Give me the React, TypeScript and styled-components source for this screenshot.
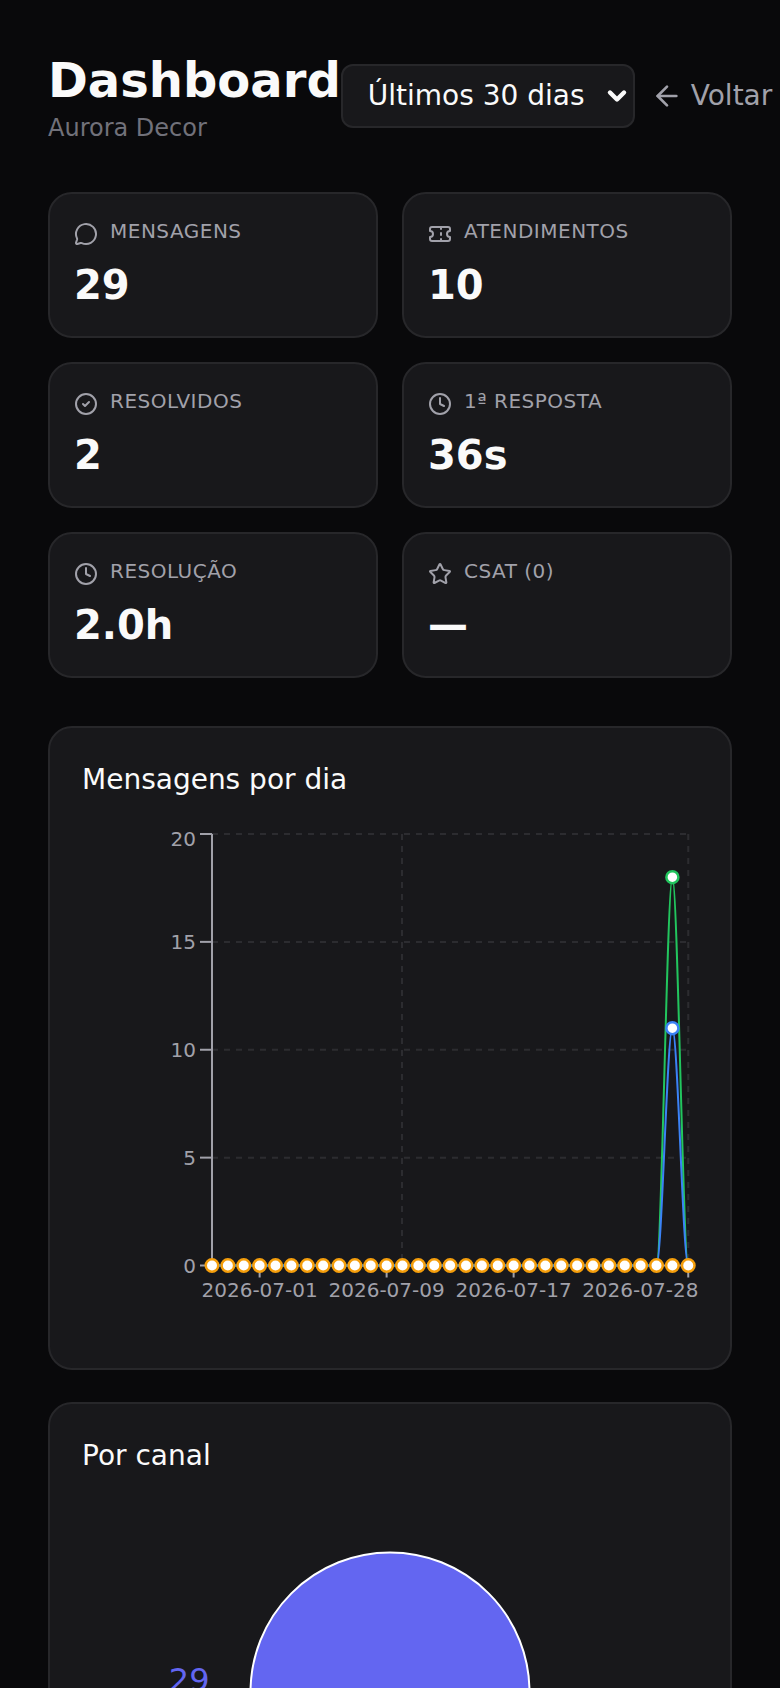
import React from 'react';
import styled, { createGlobalStyle } from 'styled-components';
import { MessageCircle, Ticket, CircleCheck, Clock, Star, ArrowLeft, ChevronDown } from 'lucide-react';

const GlobalStyle = createGlobalStyle`
  html, body {
    margin: 0;
    background: #09090b;
  }
  #root {
    height: 1688px;
    overflow: hidden;
  }
  * {
    box-sizing: border-box;
  }
`;

const Page = styled.div`
  width: 780px;
  padding: 48px;
  font-family: 'DejaVu Sans', sans-serif;
  color: #fafafa;
`;

const Header = styled.header`
  display: flex;
  align-items: center;
  margin-bottom: 48px;
`;

const TitleBlock = styled.div`
  flex-shrink: 0;
`;

const Title = styled.h1`
  margin: 0;
  font-size: 48px;
  line-height: 64px;
  font-weight: 700;
  color: #fafafa;
`;

const Subtitle = styled.p`
  margin: 0;
  font-size: 24px;
  line-height: 32px;
  color: #71717a;
`;

const Controls = styled.div`
  display: flex;
  align-items: center;
  gap: 16px;
  flex-shrink: 0;
`;

const RangeSelect = styled.div`
  display: flex;
  align-items: center;
  justify-content: space-between;
  width: 294px;
  height: 64px;
  padding: 0 2px 2px 25px;
  background: #18181b;
  border: 2px solid #27272a;
  border-radius: 12px;
  font-size: 28px;
  color: #fafafa;

  svg {
    flex-shrink: 0;
    margin-top: 2px;
  }
`;

const BackLink = styled.a`
  display: flex;
  align-items: center;
  gap: 8px;
  padding-bottom: 2px;
  font-size: 28px;
  color: #a1a1aa;

  svg {
    margin-top: 2px;
  }
`;

const StatGrid = styled.div`
  display: grid;
  grid-template-columns: 1fr 1fr;
  gap: 24px;
  margin-bottom: 48px;
`;

const Card = styled.section`
  background: #18181b;
  border: 2px solid #27272a;
  border-radius: 24px;
`;

const StatCard = styled(Card)`
  height: 146px;
  padding: 24px;
`;

const StatLabel = styled.div`
  display: flex;
  align-items: flex-start;
  gap: 12px;
  color: #a1a1aa;
  font-size: 20px;
  line-height: 26px;
  letter-spacing: 0.5px;

  svg {
    margin-top: 4px;
    flex-shrink: 0;
  }
`;

const StatValue = styled.div`
  margin-top: 15px;
  font-size: 40px;
  line-height: 48px;
  font-weight: 700;
  color: #fafafa;
`;

const ChartCard = styled(Card)<{ $height: number }>`
  height: ${p => p.$height}px;
  padding: 32px;
  margin-bottom: 32px;
`;

const ChartTitle = styled.h2`
  margin: 0;
  font-size: 28px;
  line-height: 40px;
  font-weight: 400;
  color: #fafafa;
`;

const ChartArea = styled.div`
  margin: 0 -34px;
`;

const stats = [
  { icon: MessageCircle, label: 'MENSAGENS', value: '29' },
  { icon: Ticket, label: 'ATENDIMENTOS', value: '10' },
  { icon: CircleCheck, label: 'RESOLVIDOS', value: '2' },
  { icon: Clock, label: '1ª RESPOSTA', value: '36s' },
  { icon: Clock, label: 'RESOLUÇÃO', value: '2.0h' },
  { icon: Star, label: 'CSAT (0)', value: '—' },
];

// chart coordinates are relative to the card's outer left edge and the chart area's top
const X0 = 212 - 48;
const STEP = 15.875;
const Y_ZERO = 1265.5 - 800;
const UNIT = 21.575;
const px = (i: number) => X0 + i * STEP;
const py = (v: number) => Y_ZERO - v * UNIT;

const spikePath = (peak: number) => {
  const h = STEP / 3;
  return [
    `M${px(0)} ${py(0)}`,
    `L${px(28)} ${py(0)}`,
    `C${px(28) + h} ${py(0)} ${px(29) - h} ${py(peak)} ${px(29)} ${py(peak)}`,
    `C${px(29) + h} ${py(peak)} ${px(30) - h} ${py(0)} ${px(30)} ${py(0)}`,
  ].join(' ');
};

const axisColor = '#a1a1aa';
const gridColor = '#2c2c30';
const tickFont = { fontSize: 20, fill: axisColor, fontFamily: "'DejaVu Sans', sans-serif" };

const LineChart: React.FC = () => {
  const indices = Array.from({ length: 31 }, (_, i) => i);
  return (
    <svg width={684} height={540} style={{ display: 'block' }}>
      {[20, 15, 10, 5].map(v => (
        <line key={v} x1={X0} x2={px(30)} y1={py(v)} y2={py(v)} stroke={gridColor} strokeWidth={2} strokeDasharray="6 6" />
      ))}
      {[354, px(30)].map(x => (
        <line key={x} x1={x} x2={x} y1={py(20)} y2={py(0)} stroke={gridColor} strokeWidth={2} strokeDasharray="6 6" />
      ))}
      <line x1={X0} x2={X0} y1={py(20)} y2={py(0)} stroke={axisColor} strokeWidth={2} />
      <line x1={X0} x2={px(30)} y1={py(0)} y2={py(0)} stroke={axisColor} strokeWidth={2} />
      {[20, 15, 10, 5, 0].map(v => (
        <g key={v}>
          <line x1={X0 - 12} x2={X0} y1={py(v)} y2={py(v)} stroke={axisColor} strokeWidth={2} />
          <text x={X0 - 16} y={py(v) + (v === 20 ? 12 : 7)} textAnchor="end" {...tickFont}>{v}</text>
        </g>
      ))}
      {[
        { i: 3, label: '2026-07-01' },
        { i: 11, label: '2026-07-09' },
        { i: 19, label: '2026-07-17' },
        { i: 30, label: '2026-07-28' },
      ].map(t => (
        <g key={t.i}>
          <line x1={px(t.i)} x2={px(t.i)} y1={py(0)} y2={py(0) + 12} stroke={axisColor} strokeWidth={2} />
          <text x={t.i === 30 ? px(t.i) - 48 : px(t.i)} y={py(0) + 31} textAnchor="middle" {...tickFont}>{t.label}</text>
        </g>
      ))}
      <path d={spikePath(18)} fill="none" stroke="#22c55e" strokeWidth={2} />
      <circle cx={px(29)} cy={py(18)} r={6} fill="#fff" stroke="#22c55e" strokeWidth={2.5} />
      <path d={spikePath(11)} fill="none" stroke="#3b82f6" strokeWidth={2} />
      <circle cx={px(29)} cy={py(11)} r={6} fill="#fff" stroke="#3b82f6" strokeWidth={2.5} />
      {indices.map(i => (
        <circle key={i} cx={px(i)} cy={py(0)} r={6.25} fill="#fff" stroke="#f59e0b" strokeWidth={2.5} />
      ))}
    </svg>
  );
};

const PieChart: React.FC = () => (
  <svg width={684} height={400} style={{ display: 'block' }}>
    <circle cx={342} cy={216} r={139.5} fill="#6366f1" stroke="#fff" strokeWidth={2} />
    <text x={161.5} y={215} textAnchor="end" fontSize={32} fill="#6366f1" fontFamily="'DejaVu Sans', sans-serif">29</text>
  </svg>
);

const App: React.FC = () => {
  return (
    <Page>
      <GlobalStyle />
      <Header>
        <TitleBlock>
          <Title>Dashboard</Title>
          <Subtitle>Aurora Decor</Subtitle>
        </TitleBlock>
        <Controls>
          <RangeSelect>
            Últimos 30 dias
            <ChevronDown size={28} strokeWidth={3.8} color="#fafafa" />
          </RangeSelect>
          <BackLink>
            <ArrowLeft size={32} strokeWidth={2} />
            Voltar
          </BackLink>
        </Controls>
      </Header>
      <StatGrid>
        {stats.map(s => (
          <StatCard key={s.label}>
            <StatLabel>
              <s.icon size={24} strokeWidth={2} />
              {s.label}
            </StatLabel>
            <StatValue>{s.value}</StatValue>
          </StatCard>
        ))}
      </StatGrid>
      <ChartCard $height={644}>
        <ChartTitle>Mensagens por dia</ChartTitle>
        <ChartArea>
          <LineChart />
        </ChartArea>
      </ChartCard>
      <ChartCard $height={600}>
        <ChartTitle>Por canal</ChartTitle>
        <ChartArea>
          <PieChart />
        </ChartArea>
      </ChartCard>
    </Page>
  );
};

export default App;
